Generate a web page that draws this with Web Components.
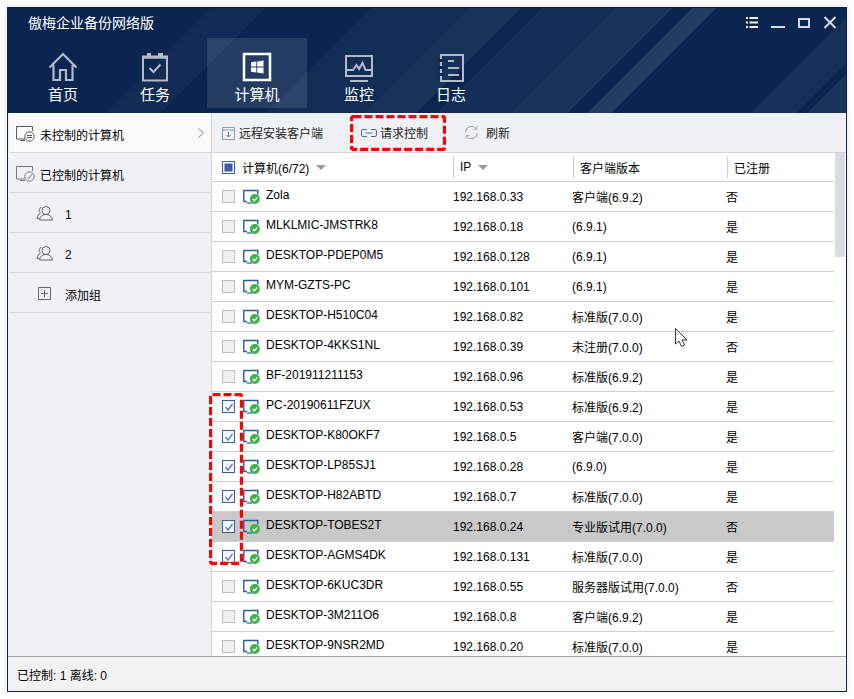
<!DOCTYPE html>
<html>
<head>
<meta charset="utf-8">
<title>backup</title>
<style>
  html, body { margin: 0; padding: 0; background: #fff; }
  body { font: 12px "Liberation Sans", "Noto Sans CJK SC", sans-serif; color: #000; }
</style>
</head>
<body>
<app-window>
  <title-bar slot="top" title="傲梅企业备份网络版"></title-bar>
  <side-panel slot="side"></side-panel>
  <tool-bar slot="tools"></tool-bar>
  <pc-table slot="main"></pc-table>
  <status-bar slot="bottom">已控制: 1 离线: 0</status-bar>
</app-window>

<script>
const FONT = '"Liberation Sans", "Noto Sans CJK SC", sans-serif';

class AppWindow extends HTMLElement {
  constructor() {
    super();
    this.attachShadow({ mode: "open" });
    this.shadowRoot.innerHTML = `
      <style>
        :host {
          display: grid;
          grid-template-columns: 204px 1fr;
          grid-template-rows: 105px 40px 1fr 35px;
          width: 838px;
          height: 683px;
          margin: 7px 0 0 7px;
          border: 1px solid #0b2750;
          border-top-color: #06224c;
          box-shadow: 0 0 6px rgba(0,0,0,.12);
          background: #fff;
          overflow: hidden;
          position: relative;
        }
        .top { grid-column: 1 / 3; }
        .side { grid-row: 2 / 4; min-height: 0; }
        .main { min-height: 0; overflow: hidden; position: relative; }
        .bottom { grid-column: 1 / 3; }
        red-mark { left: 201px; top: 385px; }
      </style>
      <div class="top"><slot name="top"></slot></div>
      <div class="side"><slot name="side"></slot></div>
      <div><slot name="tools"></slot></div>
      <div class="main"><slot name="main"></slot></div>
      <div class="bottom"><slot name="bottom"></slot></div>
      <red-mark w="34" h="172"></red-mark>
    `;
  }
}

const NAV_ICONS = {
  home: `<path d="M1.500 15.500 15 2l13.500 13.500M5.500 13v15h6.500V18h6v10h6.500V13" fill="none" stroke="currentColor" stroke-width="2.200"/>`,
  task: `<path d="M3 4.500h24v24H3z" fill="none" stroke="currentColor" stroke-width="2"/><path d="M7 1h4v4H7zM18 1h5v4h-5z" fill="currentColor"/><path d="M2 5.500h26" stroke="currentColor" stroke-width="2.500"/><path d="m9.500 16 4 4 7-7.500" fill="none" stroke="currentColor" stroke-width="2"/>`,
  pc: `<path d="M2 2h26v26H2z" fill="none" stroke="#fff" stroke-width="2.500"/><path d="M9 10.300 14.300 9.500v5H9zM15.200 9.400l6.300-1v6.100h-6.300zM9 15.500h5.300v5l-5.300-.8zM15.200 15.500h6.300v6l-6.300-.9z" fill="#fff"/>`,
  watch: `<path d="M2 4h26v20H2z" fill="none" stroke="currentColor" stroke-width="2"/><path d="M2 18h7l3.500-5 2.500 4 3.500-6 3 7h6.500" fill="none" stroke="currentColor" stroke-width="2"/><path d="M6 29h18" stroke="currentColor" stroke-width="2"/>`,
  log: `<path d="M5 3h22v26H5z" fill="none" stroke="currentColor" stroke-width="2"/><path d="M3 7h4v3H3zM3 14h4v3H3zM3 21h4v3H3z" fill="#0a2550"/><path d="M12 9h6M12 16h11M12 23h11" stroke="currentColor" stroke-width="2"/>`
};

class NavItem extends HTMLElement {
  constructor() {
    super();
    this.attachShadow({ mode: "open" });
  }
  connectedCallback() {
    const icon = this.getAttribute("icon");
    this.shadowRoot.innerHTML = `
      <style>
        :host {
          display: flex;
          flex-direction: column;
          align-items: center;
          box-sizing: border-box;
          width: 92px;
          height: 70px;
          padding-top: 14px;
          color: #b4bac7;
        }
        :host([selected]) {
          width: 100px;
          margin: 0 6px;
          background: rgba(255,255,255,.115);
        }
        svg { display: block; width: 30px; height: 30px; }
        span {
          color: #fff;
          font: 15px/18px ${FONT};
          margin-top: 4px;
        }
      </style>
      <svg viewBox="0 0 30 30">${NAV_ICONS[icon]}</svg>
      <span><slot></slot></span>
    `;
  }
}

class TitleBar extends HTMLElement {
  constructor() {
    super();
    this.attachShadow({ mode: "open" });
  }
  connectedCallback() {
    this.shadowRoot.innerHTML = `
      <style>
        :host {
          display: block;
          height: 105px;
          color: #fff;
          background:
            linear-gradient(135deg,
              transparent 0, transparent 21.700%,
              rgba(255,255,255,.03) 21.700%, rgba(255,255,255,.03) 27.300%,
              transparent 27.300%, transparent 38.600%,
              rgba(255,255,255,.035) 38.600%, rgba(255,255,255,.035) 48.900%,
              rgba(255,255,255,.06) 48.900%, rgba(255,255,255,.06) 54.500%,
              transparent 54.500%, transparent 56.600%,
              rgba(255,255,255,.035) 56.600%, rgba(255,255,255,.035) 64.400%,
              rgba(255,255,255,.07) 64.400%, rgba(255,255,255,.07) 70.500%,
              transparent 70.500%, transparent 72.600%,
              rgba(255,255,255,.1) 72.600%, rgba(255,255,255,.1) 75.100%,
              transparent 75.100%, transparent 90%,
              rgba(255,255,255,.05) 90%, rgba(255,255,255,.05) 94.800%,
              transparent 94.800%, transparent 95.900%,
              rgba(255,255,255,.07) 95.900%, rgba(255,255,255,.07) 100%),
            #0a2550;
        }
        .head {
          display: flex;
          align-items: center;
          justify-content: space-between;
          height: 30px;
          padding: 0 9px 0 20px;
        }
        .name { font: 14px/30px ${FONT}; }
        .btns { display: flex; align-items: center; gap: 12px; }
        .btns svg { display: block; width: 14px; height: 14px; }
        nav { display: flex; padding-left: 9px; }
      </style>
      <div class="head">
        <div class="name">${this.getAttribute("title")}</div>
        <div class="btns">
          <svg viewBox="0 0 14 14"><path d="M1 1h2v2H1zM1 5.500h2v2H1zM1 10h2v2H1zM4.500 1H13v2H4.500zM4.500 5.500H13v2H4.500zM4.500 10H13v2H4.500z" fill="#f0f2f5"/></svg>
          <svg viewBox="0 0 14 14"><path d="M0 10h14v2H0z" fill="#d8dbe2"/></svg>
          <svg viewBox="0 0 14 14"><path d="M2 3h10v8H2z" fill="none" stroke="#d8dbe2" stroke-width="2"/></svg>
          <svg viewBox="0 0 14 14"><path d="m1.500 1 11 11M12.500 1l-11 11" fill="none" stroke="#d8dbe2" stroke-width="2"/></svg>
        </div>
      </div>
      <nav>
        <nav-item icon="home">首页</nav-item>
        <nav-item icon="task">任务</nav-item>
        <nav-item icon="pc" selected>计算机</nav-item>
        <nav-item icon="watch">监控</nav-item>
        <nav-item icon="log">日志</nav-item>
      </nav>
    `;
  }
}

const SIDE_ICONS = {
  off: `<path d="M10 14H1.500V1.500h16V6" fill="none" stroke="#555"/><path d="M5 15.500h5" stroke="#555"/><circle cx="14.500" cy="11.500" r="4.700" fill="#fafafa" stroke="#555"/><path d="M12 10.500h5M12 12.500h5" stroke="#555"/>`,
  on: `<path d="M10 14H1.500V1.500h16V6" fill="none" stroke="#777"/><path d="M5 15.500h5" stroke="#777"/><circle cx="14.500" cy="11.500" r="4.700" fill="#f0f1f5" stroke="#777"/><path d="m12.500 12 1.500 1.500 3-4.500" fill="none" stroke="#777"/>`,
  group: `<circle cx="10" cy="5.500" r="4" fill="none" stroke="#666"/><path d="M3.500 15c.3-3.500 3-5.500 6.500-5.500s6.200 2 6.500 5.500z" fill="none" stroke="#666"/><path d="M5.500 2.500A3 3 0 0 0 4.500 8C2.500 9 1.500 11 1 13.500h2" fill="none" stroke="#666"/>`,
  add: `<path d="M2.500 2.500h12v12h-12z" fill="none" stroke="#666"/><path d="M8.500 5v7M5 8.500h7" stroke="#666"/>`
};

class SideItem extends HTMLElement {
  constructor() {
    super();
    this.attachShadow({ mode: "open" });
  }
  connectedCallback() {
    const icon = this.getAttribute("icon");
    const sub = this.hasAttribute("sub");
    this.shadowRoot.innerHTML = `
      <style>
        :host {
          display: flex;
          align-items: center;
          box-sizing: border-box;
          height: 40px;
          padding: 4px 0 0 5px;
          border-bottom: 1px solid #d4d5d9;
          background: #f0f1f5;
          font: 12px ${FONT};
        }
        :host([current]) { background: #fafafa; }
        :host([sub]) { padding-left: 26px; }
        svg { flex: none; width: ${sub ? "18px" : "20px"}; height: 17px; margin-top: -2px; }
        .label { margin-left: ${sub ? "11px" : "5px"}; flex: 1; }
        svg.arrow { width: 6px; height: 10px; margin-right: 7px; margin-top: -4px; }
      </style>
      <svg viewBox="0 0 ${sub ? 18 : 20} 17">${SIDE_ICONS[icon]}</svg>
      <span class="label"><slot></slot></span>
      ${this.hasAttribute("current") ? `<svg class="arrow" viewBox="0 0 6 10"><path d="m.5.500 5 4.500-5 4.500" fill="none" stroke="#888"/></svg>` : ""}
    `;
  }
}

class SidePanel extends HTMLElement {
  constructor() {
    super();
    this.attachShadow({ mode: "open" });
    this.shadowRoot.innerHTML = `
      <style>
        :host {
          display: block;
          box-sizing: border-box;
          height: 100%;
          padding-left: 2px;
          background: #f0f1f5;
          border-right: 1px solid #d4d5d9;
        }
      </style>
      <side-item icon="off" current>未控制的计算机</side-item>
      <side-item icon="on">已控制的计算机</side-item>
      <side-item icon="group" sub>1</side-item>
      <side-item icon="group" sub>2</side-item>
      <side-item icon="add" sub>添加组</side-item>
    `;
  }
}

class RedMark extends HTMLElement {
  constructor() {
    super();
    this.attachShadow({ mode: "open" });
  }
  connectedCallback() {
    const w = +this.getAttribute("w"), h = +this.getAttribute("h");
    this.shadowRoot.innerHTML = `
      <style>
        :host { display: block; position: absolute; pointer-events: none; width: ${w}px; height: ${h}px; }
        svg { display: block; }
      </style>
      <svg width="${w}" height="${h}"><rect x="1.500" y="1.500" width="${w - 3}" height="${h - 3}" rx="2" fill="none" stroke="#f00" stroke-width="3.300" stroke-dasharray="8 3"/></svg>
    `;
  }
}

class ToolBar extends HTMLElement {
  constructor() {
    super();
    this.attachShadow({ mode: "open" });
    this.shadowRoot.innerHTML = `
      <style>
        :host {
          display: flex;
          align-items: center;
          box-sizing: border-box;
          height: 40px;
          padding: 0 0 0 10px;
          background: #f0f1f5;
          border-bottom: 1px solid #d4d5d9;
          font: 12px ${FONT};
          color: #222;
          position: relative;
        }
        .btn { display: flex; align-items: center; gap: 4px; }
        .a { width: 102px; }
        .b { margin-left: 37px; gap: 3px; }
        .c { margin-left: 36px; gap: 7px; }
        svg { display: block; }
        red-mark { left: 138px; top: 2px; }
      </style>
      <div class="btn a">
        <svg width="13" height="14" viewBox="0 0 13 14"><path d="M.500 1.500h12v12H.500zM.500 4h12" fill="none" stroke="#8b9cb7"/><path d="M6.500 6v5M4.500 9l2 2 2-2" fill="none" stroke="#5e7aa6"/></svg>
        <span>远程安装客户端</span>
      </div>
      <div class="btn b">
        <svg width="16" height="8" viewBox="0 0 16 8"><path d="M6 .5H2A1.500 1.500 0 0 0 .5 2v4A1.500 1.500 0 0 0 2 7.500h4M10 .5h4A1.500 1.500 0 0 1 15.500 2v4A1.500 1.500 0 0 1 14 7.500h-4M4.500 4h7" fill="none" stroke="#4d6c9d"/></svg>
        <span>请求控制</span>
      </div>
      <div class="btn c">
        <svg width="15" height="15" viewBox="0 0 15 15"><path d="M1.500 7A6 6 0 0 1 12.500 4M13.500 8A6 6 0 0 1 2.500 11" fill="none" stroke="#8f9bad"/><path d="M13 1v3.500H9.500M2 14v-3.500h3.500" fill="none" stroke="#aeb6c3"/></svg>
        <span>刷新</span>
      </div>
      <red-mark w="96" h="36"></red-mark>
    `;
  }
}

class PcCheck extends HTMLElement {
  constructor() {
    super();
    this.attachShadow({ mode: "open" });
  }
  connectedCallback() {
    const state = this.getAttribute("state");
    let inner = "";
    if (state === "on") inner = `<path d="m3.500 7 2.500 3 4.500-6" fill="none" stroke="#5f7eb0" stroke-width="1.400"/>`;
    if (state === "mixed") inner = `<path d="M2.500 2.500h8v8h-8z" fill="#3b5f9c"/>`;
    const edge = state ? "#3b5f9c" : "#bdbdbd";
    const fill = state ? "#f7f8fb" : "#f0f0f0";
    this.shadowRoot.innerHTML = `
      <style>:host { display: block; width: 13px; height: 13px; } svg { display: block; }</style>
      <svg width="13" height="13" viewBox="0 0 13 13"><rect x=".5" y=".5" width="12" height="12" fill="${fill}" stroke="${edge}"/>${inner}</svg>
    `;
  }
}

class PcRow extends HTMLElement {
  constructor() {
    super();
    this.attachShadow({ mode: "open" });
  }
  connectedCallback() {
    const a = (k) => this.getAttribute(k) || "";
    this.shadowRoot.innerHTML = `
      <style>
        :host {
          display: grid;
          grid-template-columns: 241px 119px 154px 1fr;
          box-sizing: border-box;
          height: 30px;
          align-items: center;
          border-bottom: 1px solid #cfcfcf;
          background: #fff;
          font: 12px ${FONT};
        }
        :host([active]) { background: #c9c9c9; }
        .first { display: flex; align-items: center; padding-left: 10px; }
        .pc { margin-left: 8px; flex: none; }
        .name { margin-left: 5px; position: relative; top: -2px; white-space: nowrap; }
        span { white-space: nowrap; }
      </style>
      <div class="first">
        <pc-check ${this.hasAttribute("checked") ? 'state="on"' : ""}></pc-check>
        <svg class="pc" width="18" height="16" viewBox="0 0 18 16">
          <path d="M4 12.500H.8V1.500h14v4" fill="none" stroke="#2b5d9b" stroke-width="1.400"/>
          <path d="M4 14h5" stroke="#2b5d9b" stroke-width="1.200"/>
          <circle cx="11.800" cy="10" r="5" fill="#3bb54a"/>
          <path d="m9.600 10 1.700 1.800 3-3.300" fill="none" stroke="#fff" stroke-width="1.300"/>
        </svg>
        <span class="name">${a("name")}</span>
      </div>
      <span>${a("ip")}</span>
      <span>${a("ver")}</span>
      <span>${a("reg")}</span>
    `;
  }
}

const ROWS = [
  ["Zola", "192.168.0.33", "客户端(6.9.2)", "否"],
  ["MLKLMIC-JMSTRK8", "192.168.0.18", "(6.9.1)", "是"],
  ["DESKTOP-PDEP0M5", "192.168.0.128", "(6.9.1)", "是"],
  ["MYM-GZTS-PC", "192.168.0.101", "(6.9.1)", "是"],
  ["DESKTOP-H510C04", "192.168.0.82", "标准版(7.0.0)", "是"],
  ["DESKTOP-4KKS1NL", "192.168.0.39", "未注册(7.0.0)", "否"],
  ["BF-201911211153", "192.168.0.96", "标准版(6.9.2)", "是"],
  ["PC-20190611FZUX", "192.168.0.53", "标准版(6.9.2)", "是", 1],
  ["DESKTOP-K80OKF7", "192.168.0.5", "客户端(7.0.0)", "是", 1],
  ["DESKTOP-LP85SJ1", "192.168.0.28", "(6.9.0)", "是", 1],
  ["DESKTOP-H82ABTD", "192.168.0.7", "标准版(7.0.0)", "是", 1],
  ["DESKTOP-TOBES2T", "192.168.0.24", "专业版试用(7.0.0)", "否", 1, 1],
  ["DESKTOP-AGMS4DK", "192.168.0.131", "标准版(7.0.0)", "是", 1],
  ["DESKTOP-6KUC3DR", "192.168.0.55", "服务器版试用(7.0.0)", "否"],
  ["DESKTOP-3M211O6", "192.168.0.8", "客户端(6.9.2)", "是"],
  ["DESKTOP-9NSR2MD", "192.168.0.20", "标准版(7.0.0)", "是"]
];

class PcTable extends HTMLElement {
  constructor() {
    super();
    this.attachShadow({ mode: "open" });
  }
  connectedCallback() {
    const rows = ROWS.map(r =>
      `<pc-row name="${r[0]}" ip="${r[1]}" ver="${r[2]}" reg="${r[3]}" ${r[4] ? "checked" : ""} ${r[5] ? "active" : ""}></pc-row>`
    ).join("");
    this.shadowRoot.innerHTML = `
      <style>
        :host { display: block; height: 100%; position: relative; overflow: hidden; font: 12px ${FONT}; background: #fff; }
        .list { width: 622px; }
        .head {
          display: grid;
          grid-template-columns: 241px 120px 154px 1fr;
          box-sizing: border-box;
          height: 29px;
          align-items: center;
          border-bottom: 1px solid #cfcfcf;
        }
        .col { display: flex; align-items: center; height: 22px; padding-left: 6px; border-left: 1px solid #cfcfcf; }
        .col:first-child { border: 0; padding-left: 10px; }
        .col:first-child span { margin-left: 7px; }
        .caret { width: 0; height: 0; margin-left: 7px; border: 5px solid transparent; border-top: 5px solid #9a9a9a; border-bottom: 0; }
        .bar { position: absolute; right: 1px; top: 0; width: 10px; height: 104px; background: #d8dbe1; }
        .cursor { position: absolute; left: 463px; top: 175px; }
      </style>
      <div class="list">
        <div class="head">
          <div class="col"><pc-check state="mixed"></pc-check><span>计算机(6/72)</span><i class="caret"></i></div>
          <div class="col"><span>IP</span><i class="caret"></i></div>
          <div class="col"><span>客户端版本</span></div>
          <div class="col"><span>已注册</span></div>
        </div>
        ${rows}
      </div>
      <div class="bar"></div>
      <svg class="cursor" width="13" height="20" viewBox="0 0 13 20"><path d="M.5.500v15.500l3.500-3 2.500 5.500 3-1.500-2.500-5h5z" fill="#fff" stroke="#333"/></svg>
    `;
  }
}

class StatusBar extends HTMLElement {
  constructor() {
    super();
    this.attachShadow({ mode: "open" });
    this.shadowRoot.innerHTML = `
      <style>
        :host {
          display: flex;
          align-items: center;
          box-sizing: border-box;
          height: 35px;
          padding-left: 9px;
          background: #f2f2f2;
          border-top: 1px solid #a5a5a5;
          font: 12px ${FONT};
        }
      </style>
      <slot></slot>
    `;
  }
}

customElements.define("red-mark", RedMark);
customElements.define("pc-check", PcCheck);
customElements.define("pc-row", PcRow);
customElements.define("pc-table", PcTable);
customElements.define("nav-item", NavItem);
customElements.define("title-bar", TitleBar);
customElements.define("side-item", SideItem);
customElements.define("side-panel", SidePanel);
customElements.define("tool-bar", ToolBar);
customElements.define("status-bar", StatusBar);
customElements.define("app-window", AppWindow);
</script>
</body>
</html>
